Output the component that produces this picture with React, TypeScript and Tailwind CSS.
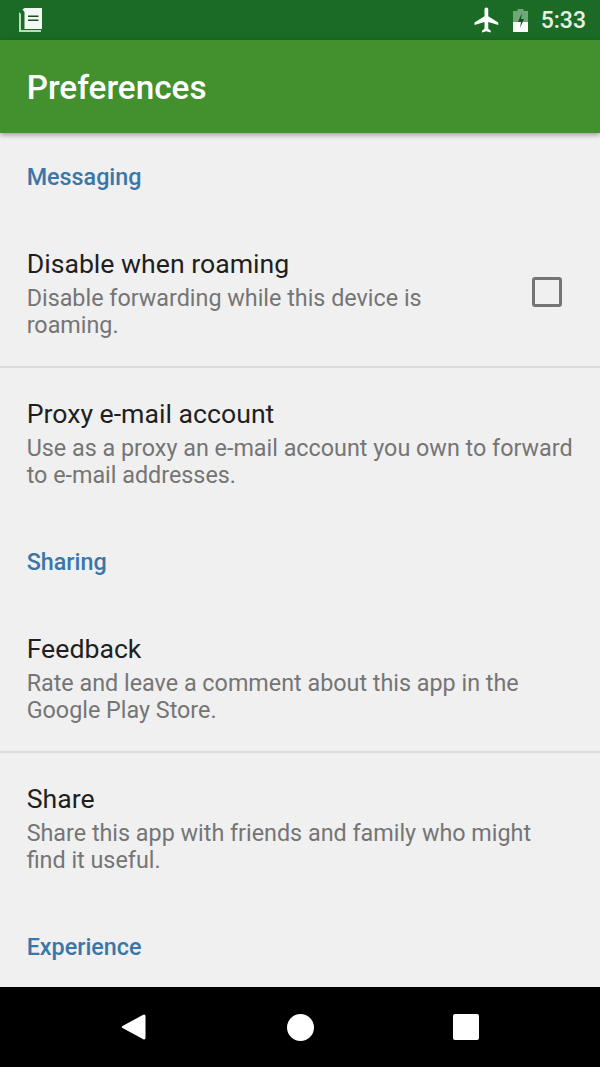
const font = { fontFamily: 'Roboto, sans-serif' };

function SectionHeader({ label }: { label: string }) {
  return (
    <div className="flex h-[85px] items-start px-[26.67px] pt-[29px]">
      <h2 className="text-[23.33px] leading-[30px] font-medium text-[#3a76a8]">{label}</h2>
    </div>
  );
}

function PrefRow({
  title,
  lines,
  checkbox,
  divider,
}: {
  title: string;
  lines: string[];
  checkbox?: boolean;
  divider?: boolean;
}) {
  return (
    <div className={`flex h-[150px] items-start pl-[26.67px] pt-[31px] ${divider ? 'border-b-2 border-[#dcdcdc]' : ''}`}>
      <div className="flex-1">
        <div className="text-[26.67px] leading-[30px] text-[#1f1f1f]">{title}</div>
        <div className="mt-[6px] text-[23.33px] leading-[27px] text-[#757575]">
          {lines.map((l) => (
            <div key={l}>{l}</div>
          ))}
        </div>
      </div>
      {checkbox && (
        <div className="mr-[38px] mt-[28px] h-[30px] w-[30px] rounded-[3px] border-[3px] border-[#757575]" />
      )}
    </div>
  );
}

export default function App() {
  return (
    <div className="flex h-[1067px] w-[600px] flex-col overflow-hidden bg-[#f0f0f0]" style={font}>
      <div className="flex h-10 shrink-0 items-center justify-between bg-[#1b6a25] pl-[18px] pr-[14px]">
        <svg width="26" height="26" viewBox="0 0 26 26">
          <path d="M1 5v20h22v-2H3V7z" fill="#b9dcb9" />
          <path d="M4.5 2.5L6.5 1H24v21H6.5V5z" fill="#f4f8f4" />
          <path d="M10 8.5h10.5v1.5H10zM10 12.5h10.5v1.5H10z" fill="#1b4d24" />
        </svg>
        <div className="flex items-center">
          <svg width="30" height="30" viewBox="0 0 24 24" className="mr-[11px]">
            <path
              d="M21 16v-2l-8-5V3.5C13 2.67 12.33 2 11.5 2S10 2.67 10 3.5V9l-8 5v2l8-2.5V19l-2 1.5V22l3.5-1 3.5 1v-1.5L13 19v-5.5l8 2.5z"
              fill="#ffffff"
            />
          </svg>
          <svg width="15" height="26" viewBox="0 0 15 26" className="mr-[13px]">
            <path d="M4.5 2h6v2H15v11H0V4h4.5z" fill="#6fa877" />
            <path d="M0 15h15v10H0z" fill="#ffffff" />
            <path d="M9 6l-4 9h3l-1 6 4-9H8z" fill="#1b4d24" />
          </svg>
          <span className="text-[23px] leading-none font-medium text-[#e6f2e6]">5:33</span>
        </div>
      </div>

      <div className="relative z-10 flex h-[93px] shrink-0 items-center bg-[#43902f] px-[26.67px] pt-[3px] shadow-[0_2px_5px_rgba(0,0,0,0.35)]">
        <h1 className="text-[33.3px] leading-none font-medium text-white">Preferences</h1>
      </div>

      <div className="flex-1 overflow-hidden">
        <SectionHeader label="Messaging" />
        <PrefRow
          title="Disable when roaming"
          lines={['Disable forwarding while this device is', 'roaming.']}
          checkbox
          divider
        />
        <PrefRow
          title="Proxy e-mail account"
          lines={['Use as a proxy an e-mail account you own to forward', 'to e-mail addresses.']}
        />
        <SectionHeader label="Sharing" />
        <PrefRow
          title="Feedback"
          lines={['Rate and leave a comment about this app in the', 'Google Play Store.']}
          divider
        />
        <PrefRow
          title="Share"
          lines={['Share this app with friends and family who might', 'find it useful.']}
        />
        <SectionHeader label="Experience" />
      </div>

      <div className="flex h-20 shrink-0 items-center justify-between bg-black pl-[121px] pr-[121px]">
        <svg width="26" height="28" viewBox="0 0 26 28">
          <path d="M23 1.5a1.5 1.5 0 0 1 1.5 1.5v22a1.5 1.5 0 0 1-2.2 1.3L1.5 15a1.2 1.2 0 0 1 0-2L22.3 1.7z" fill="#fff" />
        </svg>
        <div className="h-[27px] w-[27px] rounded-full bg-white" />
        <div className="h-[26px] w-[26px] rounded-[2px] bg-white" />
      </div>
    </div>
  );
}
